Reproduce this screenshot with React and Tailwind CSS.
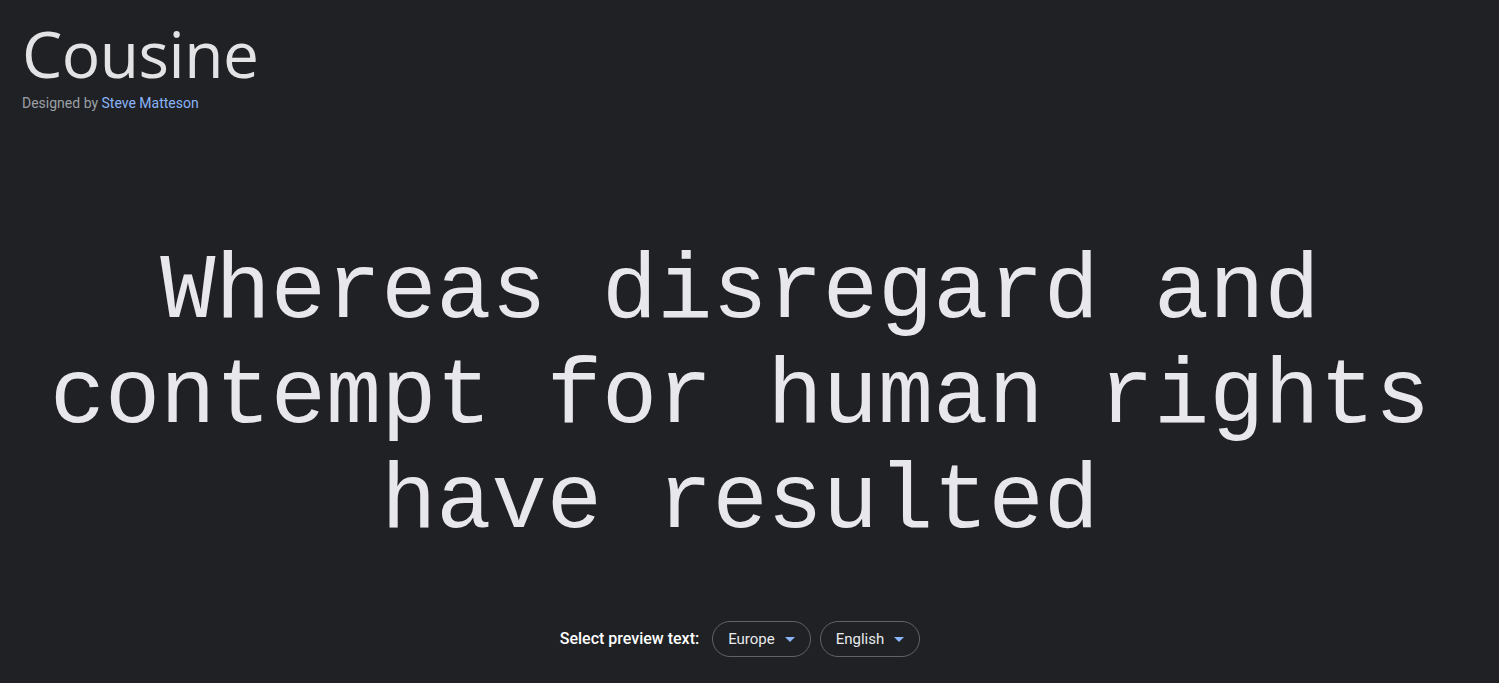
export default function App() {
  const Caret = () => (
    <svg width="10" height="5" viewBox="0 0 10 5" className="ml-[10px]">
      <path d="M0 0 L10 0 L5 5 Z" fill="#8ab4f8" />
    </svg>
  );
  return (
    <div className="min-h-[683px] w-full bg-[#202124] text-[#e8eaed]" style={{ fontFamily: "Roboto, 'Open Sans', sans-serif" }}>
      <div className="pl-[22px] pt-[18px]">
        <h1 className="text-[64px] leading-[72px] font-normal text-[#e3e3e6] tracking-[-0.5px]" style={{ fontFamily: "'Open Sans', Roboto, sans-serif" }}>Cousine</h1>
        <p className="mt-[4px] text-[14px] leading-[18px] text-[#9aa0a6]">
          Designed by <span className="text-[#8ab4f8]">Steve Matteson</span>
        </p>
      </div>
      <div className="mr-[19px] mt-[128px] flex flex-col items-center">
        <p className="text-center text-[92px] leading-[105px] text-[#e8e8ec]" style={{ fontFamily: "'Liberation Mono', monospace" }}>
          Whereas disregard and<br />contempt for human rights<br />have resulted
        </p>
        <div className="mt-[66px] flex items-center">
          <span className="mr-[13px] text-[16px] font-medium text-white">Select preview text:</span>
          <button className="mr-[9px] flex h-[36px] items-center rounded-full border border-[#5f6368] px-[15px] text-[15px] text-[#e8eaed]">
            Europe<Caret />
          </button>
          <button className="flex h-[36px] items-center rounded-full border border-[#5f6368] px-[15px] text-[15px] text-[#e8eaed]">
            English<Caret />
          </button>
        </div>
      </div>
    </div>
  );
}
